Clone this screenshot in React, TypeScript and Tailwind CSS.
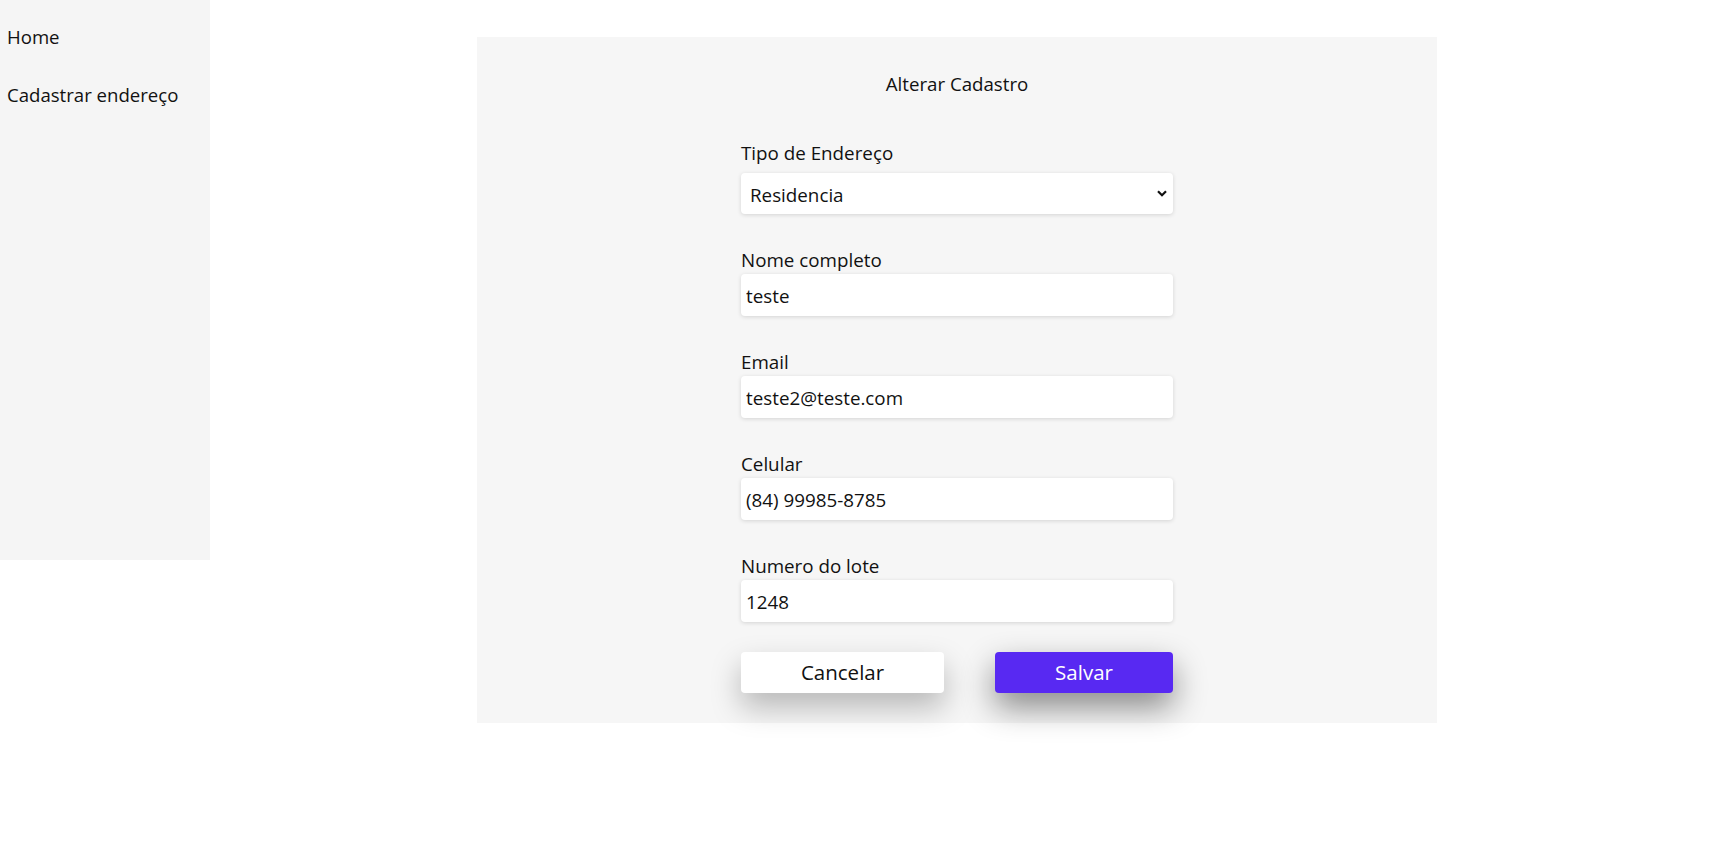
import { useState } from 'react';

const fields = [
  { label: 'Nome completo', value: 'teste', type: 'text' },
  { label: 'Email', value: 'teste2@teste.com', type: 'email' },
  { label: 'Celular', value: '(84) 99985-8785', type: 'tel' },
  { label: 'Numero do lote', value: '1248', type: 'text' },
];

function Sidebar() {
  return (
    <nav className="w-[210px] h-[560px] shrink-0 bg-[#f5f5f5] pt-[25px] px-[7px] flex flex-col gap-[34px]">
      <a className="text-[18.6px] leading-[24px] text-[#111] cursor-pointer">Home</a>
      <a className="text-[18.6px] leading-[24px] text-[#111] cursor-pointer">Cadastrar endereço</a>
    </nav>
  );
}

export default function App() {
  const [tipo, setTipo] = useState('Residencia');

  return (
    <div className="flex min-h-[858px] bg-white font-['Open_Sans','Noto_Sans',sans-serif] text-[#111]">
      <Sidebar />

      {/* Main */}
      <main className="flex-1 pt-[37px] pl-[267px]">
        <div className="w-[960px] bg-[#f6f6f6] pt-[35px] pb-[30px] flex flex-col items-center">
          <h1 className="text-[18.7px] leading-[24px] font-normal">Alterar Cadastro</h1>

          <form className="w-[432px] mt-[45px] flex flex-col" onSubmit={(e) => e.preventDefault()}>
            {/* Tipo de endereco */}
            <label className="text-[18.8px] leading-[24px]">Tipo de Endereço</label>
            <div className="relative mt-2">
              <select
                value={tipo}
                onChange={(e) => setTipo(e.target.value)}
                className="w-full h-[41px] appearance-none bg-white rounded-[4px] pl-[9px] pr-8 pt-[3px] text-[18.8px] text-[#111] outline-none shadow-[0_1px_4px_rgba(0,0,0,0.14)]"
              >
                <option>Residencia</option>
                <option>Comercial</option>
              </select>
              <svg
                className="absolute right-[6px] top-[17px] w-[10px] h-[7px] pointer-events-none"
                viewBox="0 0 10 7"
                fill="none"
                stroke="#111"
                strokeWidth="2.2"
              >
                <path d="M1 1.2l4 4 4-4" />
              </svg>
            </div>

            {fields.map((f) => (
              <div key={f.label} className="mt-[34px] flex flex-col">
                <label className="text-[18.8px] leading-[24px]">{f.label}</label>
                <input
                  type={f.type}
                  defaultValue={f.value}
                  className="mt-[2px] w-full h-[42px] bg-white rounded-[4px] px-[5px] pt-[2px] text-[18.8px] text-[#111] outline-none shadow-[0_1px_4px_rgba(0,0,0,0.14)]"
                />
              </div>
            ))}

            {/* Actions */}
            <div className="mt-[30px] flex justify-between">
              <button
                type="button"
                className="w-[203px] h-[41px] bg-white rounded-[4px] text-[20.5px] text-[#111] shadow-[0_14px_30px_rgba(0,0,0,0.26)]"
              >
                Cancelar
              </button>
              <button
                type="submit"
                className="w-[178px] h-[41px] bg-[#5829f2] rounded-[4px] text-[20.5px] text-white shadow-[0_14px_32px_rgba(0,0,0,0.45)]"
              >
                Salvar
              </button>
            </div>
          </form>
        </div>
      </main>
    </div>
  );
}
